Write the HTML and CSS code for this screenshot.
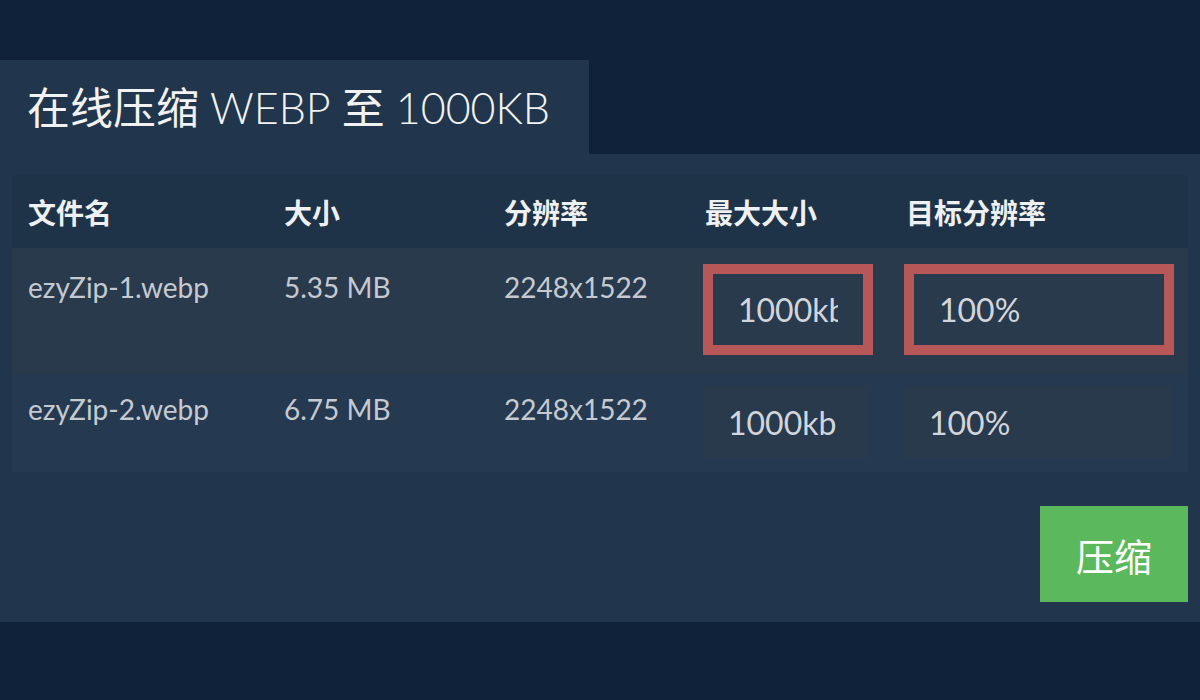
FILE: index.html
```html
<!DOCTYPE html>
<html lang="zh">
<head>
<meta charset="utf-8">
<title>在线压缩 WEBP 至 1000KB</title>
<link rel="stylesheet" href="styles.css">
</head>
<body>
<main class="page">
  <div class="tab"><h1 class="title">在线压缩 <span class="latin">WEBP</span> 至 <span class="latin">1000KB</span></h1></div>
  <section class="panel">
    <table class="files">
      <colgroup>
        <col class="c1"><col class="c2"><col class="c3"><col class="c4"><col class="c5">
      </colgroup>
      <thead>
        <tr class="head">
          <th>文件名</th><th>大小</th><th>分辨率</th><th>最大大小</th><th>目标分辨率</th>
        </tr>
      </thead>
      <tbody>
        <tr class="row odd">
          <td>ezyZip-1.webp</td><td>5.35 MB</td><td>2248x1522</td>
          <td><input class="field small invalid" type="text" value="1000kb"></td>
          <td><input class="field wide invalid" type="text" value="100%"></td>
        </tr>
        <tr class="row even">
          <td>ezyZip-2.webp</td><td>6.75 MB</td><td>2248x1522</td>
          <td><input class="field small" type="text" value="1000kb"></td>
          <td><input class="field wide" type="text" value="100%"></td>
        </tr>
      </tbody>
    </table>
    <div class="actions"><button class="btn" type="button">压缩</button></div>
  </section>
</main>
</body>
</html>
```
FILE: styles.css
```css
html, body {
  margin: 0;
  padding: 0;
  background: #0f2239;
  font-family: Lato, "Noto Sans CJK SC", sans-serif;
  color: #d6d9de;
}
.page {
  padding-top: 60px;
}
.tab {
  width: 589px;
  height: 94px;
  background: #21364c;
  box-sizing: border-box;
  padding-left: 27px;
  display: flex;
  align-items: center;
}
.title {
  margin: 0;
  font-size: 43px;
  font-weight: 400;
  color: #f2f2f2;
  line-height: 1;
  white-space: nowrap;
}
.title .latin {
  font-weight: 300;
}
.panel {
  background: #21364c;
  padding: 21px 12px 20px;
}
.files {
  width: 1176px;
  border-collapse: collapse;
  table-layout: fixed;
}
.c1 { width: 256px; }
.c2 { width: 220px; }
.c3 { width: 201px; }
.c4 { width: 201px; }
.c5 { width: 298px; }
.head {
  background: #1e3248;
  height: 73px;
}
.head th {
  text-align: left;
  font-size: 28px;
  font-weight: 700;
  color: #eef0f2;
  padding: 0 16px;
  vertical-align: middle;
}
.row td {
  font-size: 28px;
  color: #c5cad1;
  padding: 16px 16px 17px 16px;
  vertical-align: top;
  line-height: 46px;
}
.row td:nth-child(4), .row td:nth-child(5) {
  padding-left: 14px;
}
.odd { background: #2a3a4d; height: 126px; }
.even { background: #253a50; height: 98px; }
.even td { padding-top: 12px; padding-bottom: 12px; line-height: 46px; }
.field {
  display: block;
  box-sizing: border-box;
  height: 72px;
  background: #293a4c;
  border: 0;
  color: #d2d6dc;
  font-family: Lato, "Noto Sans CJK SC", sans-serif;
  font-size: 32px;
  padding: 0 25px;
  outline: none;
}
.field.small { width: 167px; }
.field.wide { width: 267px; }
.field.invalid {
  border: 10px solid #b85757;
  height: 91px;
  width: 170px;
}
.field.wide.invalid { width: 270px; }
.actions {
  display: flex;
  justify-content: flex-end;
  padding-top: 34px;
}
.btn {
  width: 148px;
  height: 96px;
  background: #5cb85c;
  color: #ffffff;
  border: 0;
  font-family: Lato, "Noto Sans CJK SC", sans-serif;
  font-size: 38px;
  padding: 0;
}
```
